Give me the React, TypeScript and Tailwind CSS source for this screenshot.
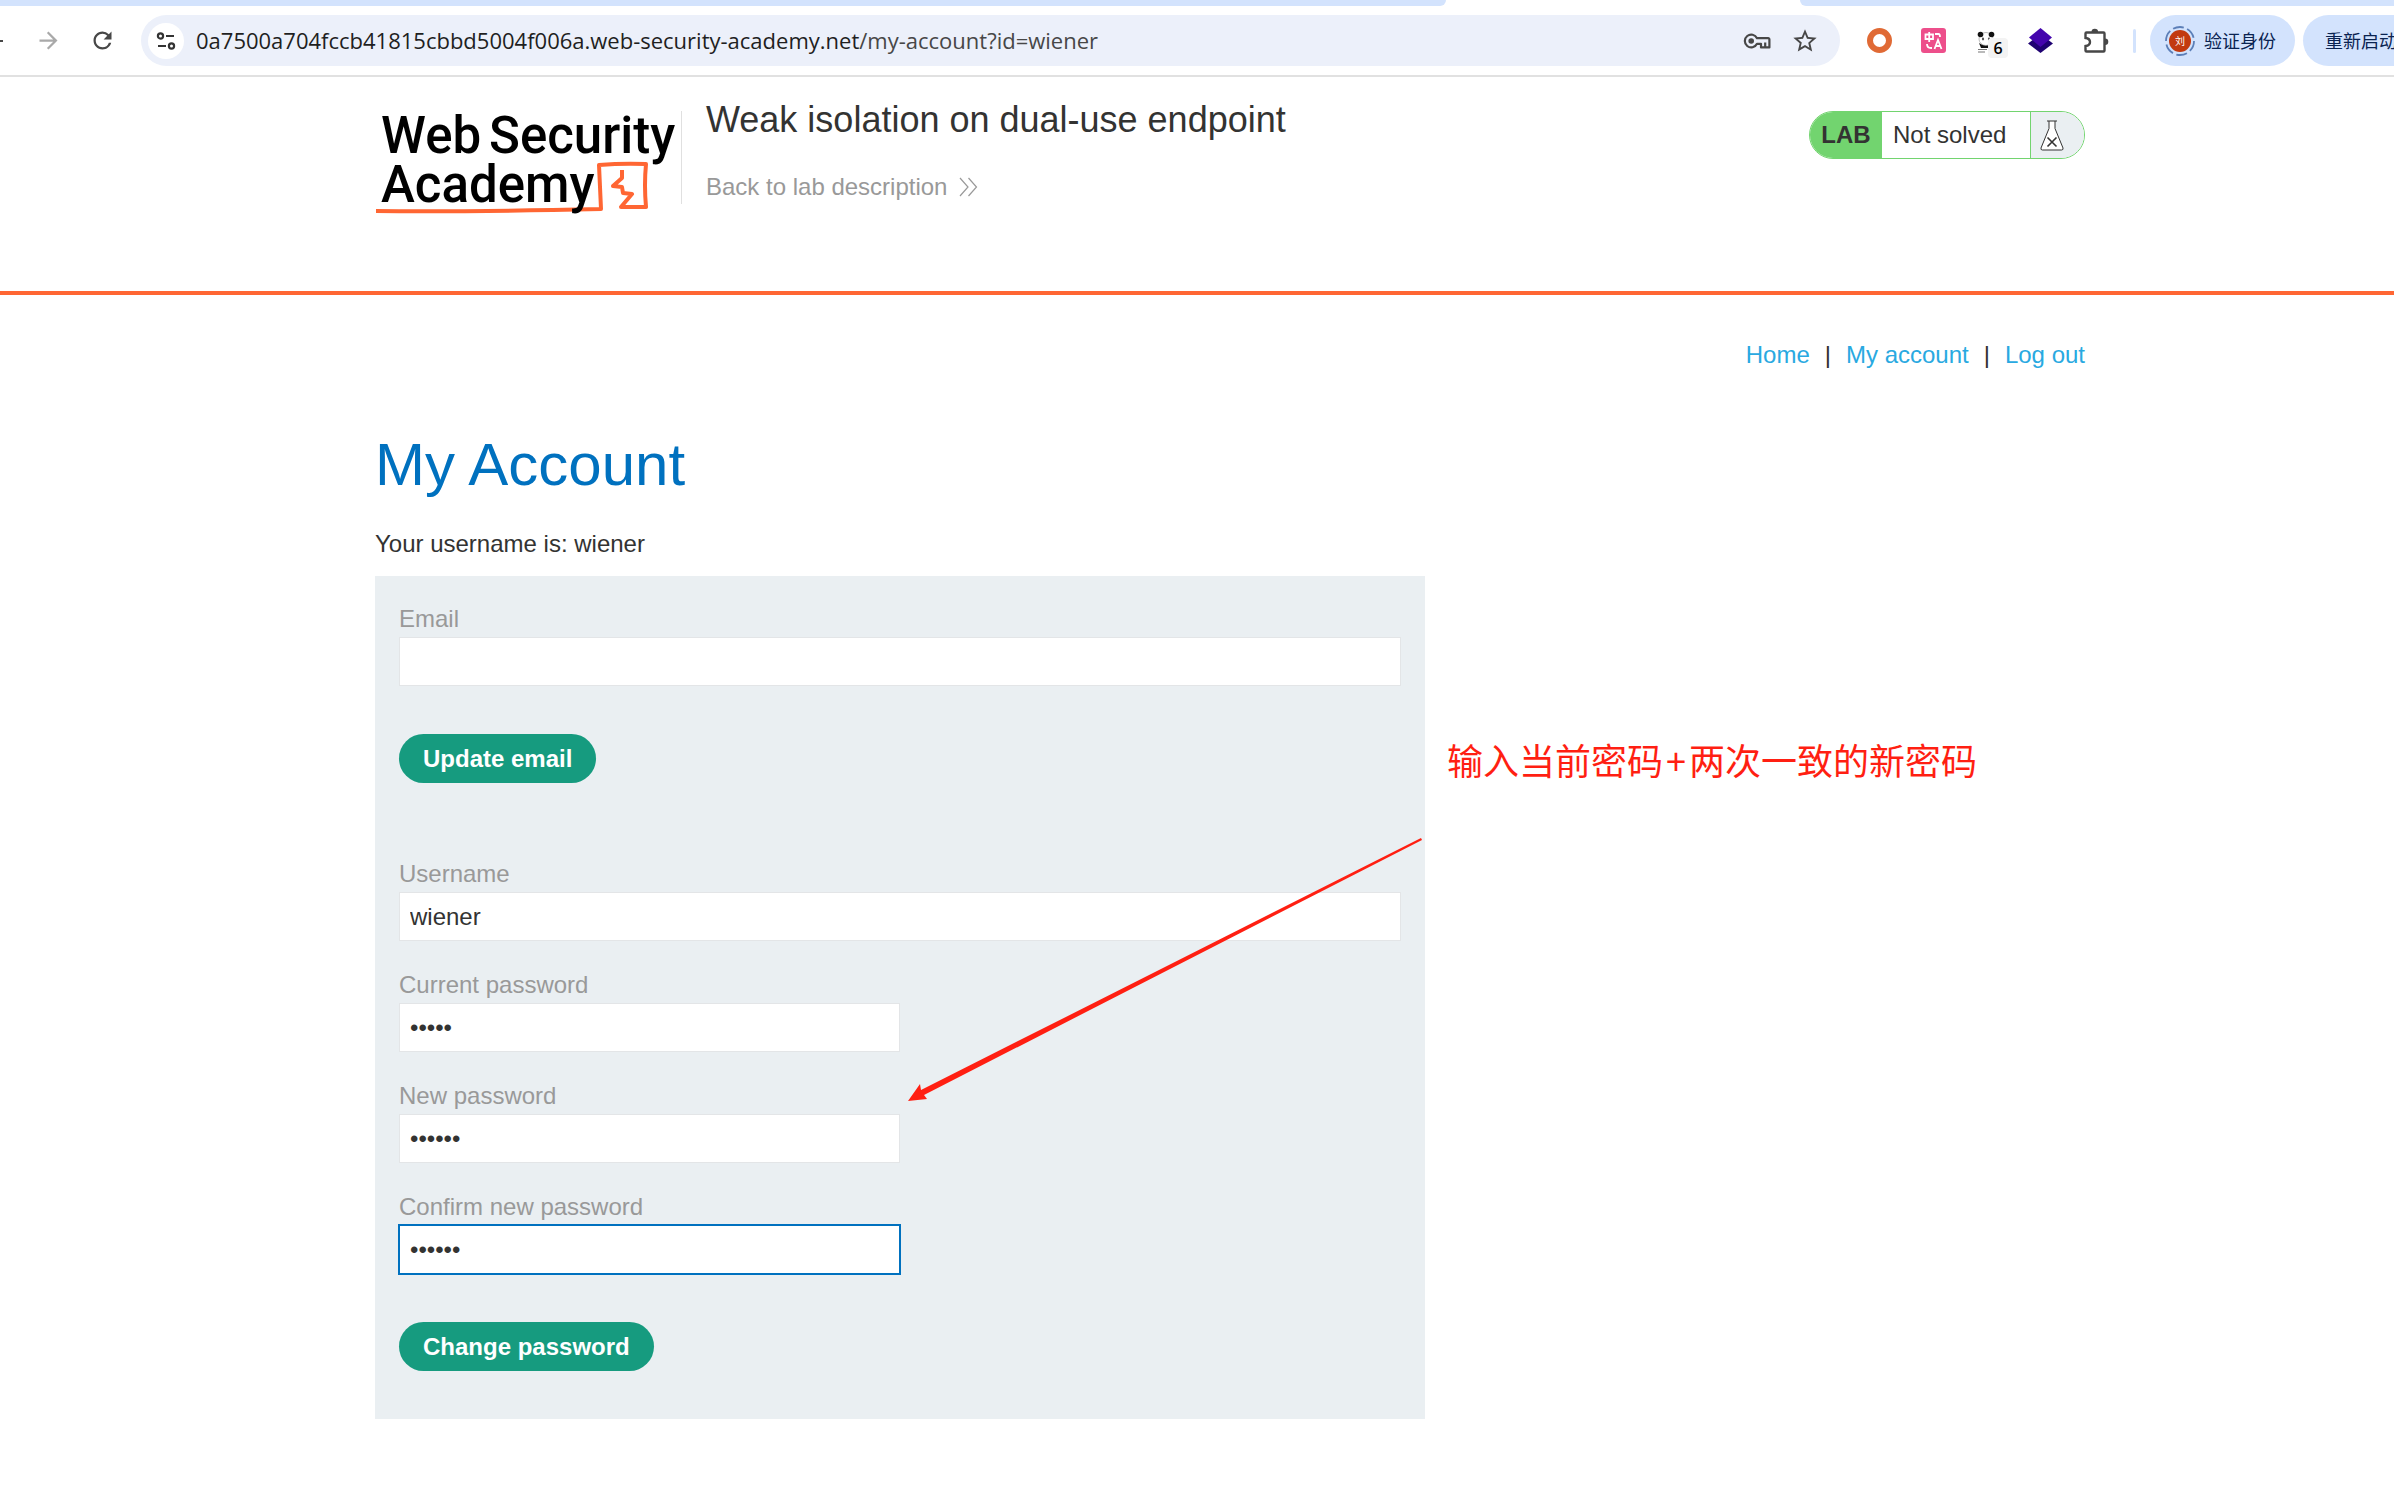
import { MdArrowForward, MdRefresh, MdStarOutline } from "react-icons/md";

const inputClass = "block h-[49px] border bg-white px-2.5 text-2xl text-[#333332] outline-none";

function Field({
  id,
  label,
  type,
  value = "",
  short = false,
  active = false,
}: {
  id: string;
  label: string;
  type: string;
  value?: string;
  short?: boolean;
  active?: boolean;
}) {
  return (
    <div>
      <label htmlFor={id} className="block leading-9 text-[#999]">
        {label}
      </label>
      <input
        id={id}
        type={type}
        defaultValue={value}
        className={`${inputClass} ${short ? "w-1/2" : "w-full"} ${active ? "border-[#0071bf] ring-1 ring-[#0071bf]" : "border-[#e3e5e7]"}`}
      />
    </div>
  );
}

function SubmitButton({ children }: { children: string }) {
  return (
    <button
      type="submit"
      className="mt-12 block h-[49px] rounded-full bg-[#169b7f] px-6 font-bold text-white"
    >
      {children}
    </button>
  );
}

function BrowserBar() {
  return (
    <div className="font-['Open_Sans','Noto_Sans_CJK_SC',sans-serif]">
      <div className="flex h-1.5 justify-between">
        <div className="w-[1446px] rounded-br-full bg-[#d3e3fd]" />
        <div className="w-[594px] rounded-bl-full bg-[#d3e3fd]" />
      </div>
      <div className="flex h-[71px] items-center overflow-hidden border-b-2 border-[#e1e1e1]">
        <button aria-label="Back" className="h-0.5 w-[3px] bg-[#474747]" />
        <button aria-label="Forward" className="ml-8 text-[#a9a9a9]">
          <MdArrowForward size={27} />
        </button>
        <button aria-label="Reload" className="ml-[27px] text-[#474747]">
          <MdRefresh size={27} />
        </button>
        <div className="ml-[25px] flex h-[51px] flex-1 items-center rounded-full bg-[#ecf0fa] pr-[21px] pl-[7px]">
          <button
            aria-label="Site information"
            className="flex size-9 shrink-0 items-center justify-center rounded-full bg-white"
          >
            <svg width="20" height="20" viewBox="0 0 20 20" fill="none" stroke="#333" strokeWidth="2.2">
              <circle cx="4.5" cy="5" r="2.6" />
              <path d="M10 5h8M2 15h8" />
              <circle cx="15.5" cy="15" r="2.6" />
            </svg>
          </button>
          <div className="ml-3 flex-1 text-[22px] whitespace-nowrap text-[#1f1f1f]">
            0a7500a704fccb41815cbbd5004f006a.web-security-academy.net
            <span className="text-[#474747]">/my-account?id=wiener</span>
          </div>
          <button aria-label="Passwords">
            <svg width="28" height="18" viewBox="0 0 28 18" fill="none" stroke="#474747" strokeWidth="2.2">
              <path d="M14 6.2a6.4 6.4 0 1 0 0 5.6h4v3.6h8.4V7.4a1.2 1.2 0 0 0-1.2-1.2z" strokeLinejoin="round" />
              <path d="M22.2 10.5v4.500" />
              <circle cx="8.2" cy="9" r="2.8" fill="#474747" stroke="none" />
            </svg>
          </button>
          <button aria-label="Bookmark" className="ml-5 text-[#474747]">
            <MdStarOutline size={28} />
          </button>
        </div>

        <div className="ml-[27px] flex items-center">
          <div className="size-[25px] rounded-full border-[6px] border-[#e06a35]" />
          <svg className="ml-[29px]" width="25" height="25" viewBox="0 0 25 25" fill="none">
            <rect width="25" height="25" rx="3" fill="#ed4f8b" />
            <g stroke="#fff" strokeWidth="1.8">
              <path d="M4.5 6.5h7.5v4.5H4.5zM8.2 4v10M14 6h3.5q1.5 0 1.5 3M6 16q0 4 4 4h1" />
              <path d="M13.5 21l3.5-9 3.5 9M14.8 18h4.5" />
            </g>
          </svg>
          <div className="relative ml-[30px] h-[30px] w-8">
            <svg className="mt-1" width="20" height="24" viewBox="0 0 20 24">
              <ellipse cx="10" cy="9" rx="7" ry="6.5" fill="#fff" stroke="#bbb" />
              <circle cx="4.5" cy="4.5" r="2.8" fill="#111" />
              <circle cx="15.5" cy="4.5" r="2.8" fill="#111" />
              <ellipse cx="7" cy="9" rx="1.1" ry="1.4" fill="#555" />
              <ellipse cx="13" cy="9" rx="1.1" ry="1.4" fill="#555" />
              <path d="M3 13q5 4 10 2l-1 3H5z" fill="#111" />
              <path d="M2 19.5h9M2 22h7" stroke="#777" strokeWidth="1.2" />
            </svg>
            <span className="absolute top-3 left-3 flex size-5 items-center justify-center rounded-sm bg-[#f3f3f3] font-['Open_Sans',sans-serif] text-base font-semibold text-black">
              6
            </span>
          </div>
          <svg className="ml-5" width="25" height="25" viewBox="0 0 25 25">
            <path d="M12.5 6L25 15.5 12.5 25 0 15.5z" fill="#1f0272" />
            <path d="M12.5 0L24 9.5 12.5 19 1 9.5z" fill="#4405ad" />
          </svg>
          <svg className="ml-[30px]" width="26" height="26" viewBox="0 0 26 26" fill="none">
            <path
              d="M3.5 4.500h17a1 1 0 0 1 1 1v17a1 1 0 0 1-1 1h-17a1 1 0 0 1-1-1v-4.500q4.500-.5 4.500-4t-4.500-4V5.500a1 1 0 0 1 1-1z"
              stroke="#474747"
              strokeWidth="2.4"
            />
            <path d="M8.5 4a3.3 3.3 0 0 1 6.600 0zM22 10.500a3.300 3.300 0 0 1 0 6.600z" fill="#474747" />
          </svg>
          <div className="ml-6 h-6 w-[3px] rounded-full bg-[#d3e3fd]" />
        </div>

        <button className="ml-3.5 flex h-[51px] shrink-0 items-center rounded-full bg-[#d3e3fd] pr-[19px] pl-[15px] text-lg text-[#0a2351]">
          <svg className="mr-[9px]" width="30" height="30" viewBox="0 0 30 30">
            <circle cx="15" cy="15" r="14" fill="none" stroke="#5c7fb8" strokeWidth="1.8" strokeDasharray="11 3.6" />
            <circle cx="15" cy="15" r="11" fill="#c23a10" />
            <text x="15" y="19" fontSize="10" textAnchor="middle" fill="#fff">
              刘
            </text>
          </svg>
          验证身份
        </button>
        <button className="ml-2 h-[51px] w-[91px] shrink-0 overflow-hidden rounded-l-full bg-[#d3e3fd] pl-[22px] text-left text-lg whitespace-nowrap text-[#0a2351]">
          重新启动
        </button>
      </div>
    </div>
  );
}

function Logo() {
  return (
    <svg
      width="300"
      height="115"
      viewBox="0 0 300 115"
      role="img"
      aria-label="Web Security Academy"
      className="shrink-0 overflow-visible font-['Roboto',sans-serif] font-medium"
    >
      <path
        d="M1 106Q90 107 226 104L224 60Q248 58 271 59Q269 80 271 102L246 102L257 89L248 88L247 82L238 81L247 73L247 65"
        fill="none"
        stroke="#ff6633"
        strokeWidth="4"
        strokeLinejoin="round"
      />
      <text x="6" y="48" fontSize="51">
        Web
      </text>
      <text x="114" y="48" fontSize="51">
        Security
      </text>
      <text x="6" y="97" fontSize="51">
        Academy
      </text>
    </svg>
  );
}

function LabHeader() {
  return (
    <header className="h-[218px] border-b-4 border-[#ff6633]">
      <div className="ml-[375px] flex max-w-[1710px] items-start pt-[19px]">
        <div className="mt-[9px]">
          <Logo />
        </div>
        <div className="mt-[15px] ml-1.5 h-[93px] w-px bg-[#e0e0e0]" />
        <div className="ml-6 flex-1">
          <h2 className="text-4xl leading-12">Weak isolation on dual-use endpoint</h2>
          <a href="#" className="mt-[25px] inline-flex items-center leading-9 text-[#999]">
            Back to lab description
            <svg className="ml-3" width="19" height="20" viewBox="0 0 19 20" fill="none" stroke="#999" strokeWidth="1.2">
              <path d="M1 1l8 9-8 9M9.5 1l8 9-8 9" />
            </svg>
          </a>
        </div>
        <div className="mt-[15px] flex h-12 overflow-hidden rounded-full border border-[#72d46f]">
          <strong className="flex w-[72px] items-center justify-center bg-[#72d46f]">LAB</strong>
          <span className="flex w-[148px] items-center pl-[11px]">Not solved</span>
          <span className="flex w-[54px] items-center border-l border-[#72d46f] bg-[#eaeff2] pl-[9px]">
            <svg width="24" height="31" viewBox="0 0 24 31" fill="none">
              <path
                d="M7 1h10M9 1v7.5L1 28q-.5 2 1.5 2h19q2 0 1.5-2L15 8.5V1"
                fill="#fff"
                stroke="#333332"
              />
              <path d="M7.5 17.5l9 9M16.5 17.5l-9 9" stroke="#333332" strokeWidth="1.6" />
            </svg>
          </span>
        </div>
      </div>
    </header>
  );
}

function Annotation() {
  return (
    <>
      <p className="absolute top-[153px] left-[1072px] font-['Noto_Sans_CJK_SC',sans-serif] text-4xl leading-[60px] font-normal whitespace-nowrap text-[#ff1f12]">
        输入当前密码<span className="mx-[3px]">+</span>两次一致的新密码
      </p>
      <svg
        className="pointer-events-none absolute top-[262px] left-[533px]"
        width="516"
        height="266"
        viewBox="0 0 516 266"
        fill="#ff1f12"
      >
        <path d="M513 0L514 2 16 257 19 261 0 263 12 246 13 252z" />
      </svg>
    </>
  );
}

export default function App() {
  return (
    <div className="bg-white font-['Liberation_Sans',Arial,sans-serif] text-2xl text-[#333332]">
      <BrowserBar />
      <LabHeader />
      <main className="ml-[375px] max-w-[1710px] pt-[42px]">
        <nav className="flex justify-end gap-[15px] leading-9 text-[#29a9e1]">
          <a href="#">Home</a>
          <span className="text-[#333332]">|</span>
          <a href="#">My account</a>
          <span className="text-[#333332]">|</span>
          <a href="#">Log out</a>
        </nav>
        <h1 className="mt-14 text-6xl leading-[72px] text-[#0071bf]">My Account</h1>
        <p className="mt-[25px] leading-9">Your username is: wiener</p>

        <div className="relative mt-3.5">
          <div className="max-w-[1050px] bg-[#eaeff2] px-6 pt-[25px] pb-12">
            <form onSubmit={(e) => e.preventDefault()}>
              <Field id="email" label="Email" type="email" />
              <SubmitButton>Update email</SubmitButton>
            </form>
            <form className="mt-[73px]" onSubmit={(e) => e.preventDefault()}>
              <div className="space-y-[26px]">
                <Field id="username" label="Username" type="text" value="wiener" />
                <Field id="current" label="Current password" type="password" value="peter" short />
                <Field id="new" label="New password" type="password" value="123456" short />
                <Field id="confirm" label="Confirm new password" type="password" value="123456" short active />
              </div>
              <SubmitButton>Change password</SubmitButton>
            </form>
          </div>
          <Annotation />
        </div>
      </main>
    </div>
  );
}
